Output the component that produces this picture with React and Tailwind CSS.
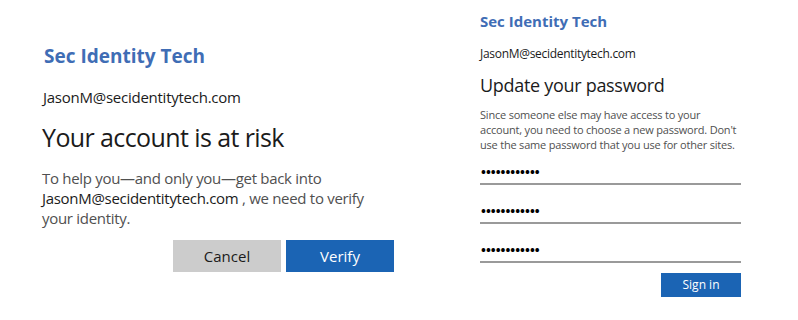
import { Fragment } from 'react';

const font = { fontFamily: "'Open Sans','Noto Sans',sans-serif" };

function PasswordField() {
  return (
    <div className="h-[39px] flex flex-col justify-end">
      <div className="border-b-2 border-[#9a9a9a] pb-[4px] pl-[1px] text-[13px] leading-[14px] font-bold text-black">
        ••••••••••••
      </div>
    </div>
  );
}

export default function App() {
  return (
    <div className="w-[798px] h-[320px] bg-white flex overflow-hidden" style={font}>
      {/* Left card: account at risk */}
      <div className="w-[438px] pl-[42px] pt-[44px]">
        <h1 className="text-[19px] leading-[24px] font-bold text-[#3f6db5] pl-[2px]">Sec Identity Tech</h1>
        <p className="mt-[19px] text-[15px] leading-[20px] tracking-[-0.25px] text-[#1b1b1b] pl-[1px]">JasonM@secidentitytech.com</p>
        <h2 className="mt-[13px] text-[25px] leading-[34px] tracking-[-0.6px] text-[#1b1b1b]">Your account is at risk</h2>
        <p className="mt-[14px] w-[350px] text-[15px] leading-[20px] tracking-[-0.3px] text-[#505050]">
          To help you—and only you—get back into <span className="text-[#1b1b1b]">JasonM@secidentitytech.com</span> , we need to verify your identity.
        </p>
        <div className="mt-[12px] w-[352px] flex justify-end gap-[5px]">
          <button className="w-[108px] h-[32px] bg-[#cccccc] text-[15px] text-[#1b1b1b]">Cancel</button>
          <button className="w-[108px] h-[32px] bg-[#1b64b4] text-[15px] text-white">Verify</button>
        </div>
      </div>

      {/* Right card: update password */}
      <div className="flex-1 pl-[42px] pt-[11px]">
        <h1 className="text-[15px] leading-[20px] font-bold text-[#3f6db5]">Sec Identity Tech</h1>
        <p className="mt-[15px] text-[12px] leading-[16px] tracking-[-0.3px] text-[#1b1b1b]">JasonM@secidentitytech.com</p>
        <h2 className="mt-[11px] text-[18px] leading-[24px] tracking-[-0.3px] text-[#1b1b1b]">Update your password</h2>
        <p className="mt-[10px] w-[275px] text-[11px] leading-[15px] tracking-[-0.2px] text-[#505050]">
          Since someone else may have access to your
          <br />
          account, you need to choose a new password. Don't
          <br />
          use the same password that you use for other sites.
        </p>
        <div className="w-[261px] mt-[-6px]">
          {[0, 1, 2].map((i) => (
            <Fragment key={i}>
              <PasswordField />
            </Fragment>
          ))}
          <div className="mt-[10px] flex justify-end">
            <button className="w-[80px] h-[24px] bg-[#1b64b4] text-[12px] text-white">Sign in</button>
          </div>
        </div>
      </div>
    </div>
  );
}
